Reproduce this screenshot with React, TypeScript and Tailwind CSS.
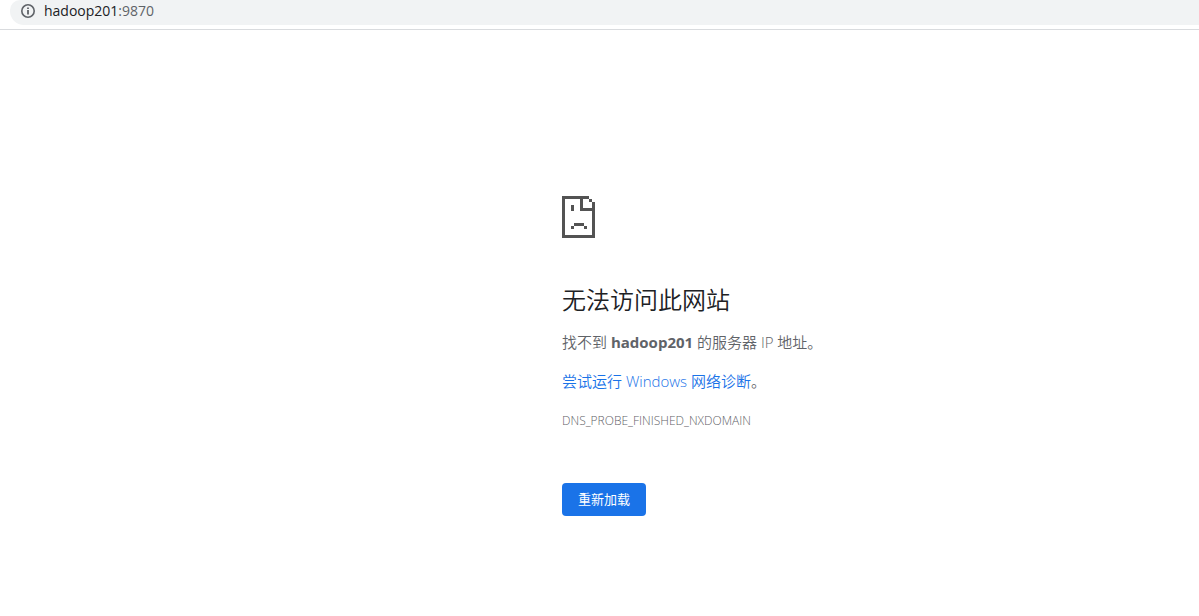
import React from 'react';
import type { FC } from 'react';

const InfoIcon: FC = () => (
  <svg
    viewBox="0 0 16 16"
    className="size-4 shrink-0 text-[#5f6368]"
    fill="none"
    stroke="currentColor"
    aria-hidden="true"
  >
    <circle cx="8" cy="8" r="6.2" strokeWidth="1.6" />
    <path d="M8 7v4.4M8 4.4V6" strokeWidth="1.8" />
  </svg>
);

// Blocky page with a folded corner and a sad face
const SadPageIcon: FC = () => (
  <svg
    viewBox="0 0 33 42"
    className="h-[42px] w-[33px] text-[#535353]"
    fill="currentColor"
    shapeRendering="crispEdges"
    aria-hidden="true"
  >
    <path d="M0 0h27v3H0z M0 0h3v42H0z M0 39h33v3H0z M30 6h3v36h-3z" />
    <path d="M18 0h3v15h-3z M18 12h15v3H18z M27 3h3v3h-3z" />
    <path d="M9 9h3v6H9z M12 27h10v3H12z M9 30h3v3H9z M22 30h3v3h-3z" />
  </svg>
);

const AddressBar: FC = () => (
  <header className="border-b border-[#d9dbde] pb-1 pl-[10px]">
    <div className="flex h-[25px] items-start gap-2 rounded-bl-[14px] rounded-tl-[10px] bg-[#f1f3f4] pt-[3px] pl-[10px]">
      <InfoIcon />
      <p className="text-sm leading-4 text-[#5f6368]">
        <span className="text-[#202124]">hadoop201</span>:9870
      </p>
    </div>
  </header>
);

export default function App() {
  return (
    <div className="min-h-screen bg-white font-['Open_Sans','Noto_Sans_CJK_SC',sans-serif] text-[#5f6368]">
      <AddressBar />
      <div className="grid grid-cols-[562fr_637fr] pt-[166px]">
        <main className="col-start-2 text-[15px] leading-6 font-[350]">
          <SadPageIcon />
          <h1 className="mt-[47px] text-2xl leading-[30px] font-[350] text-[#202124]">
            无法访问此网站
          </h1>
          <p className="mt-[15px]">
            找不到 <strong className="font-bold">hadoop201</strong> 的服务器 IP 地址。
          </p>
          <p className="mt-[15px]">
            <a href="#diagnose" className="text-[#1a73e8]">
              尝试运行 Windows 网络诊断
            </a>
            。
          </p>
          <p className="mt-4 text-xs leading-6">DNS_PROBE_FINISHED_NXDOMAIN</p>
          <button
            type="button"
            className="mt-[50px] h-[33px] rounded bg-[#1a73e8] px-4 pb-[2px] text-[13px] font-normal text-white"
          >
            重新加载
          </button>
        </main>
      </div>
    </div>
  );
}
